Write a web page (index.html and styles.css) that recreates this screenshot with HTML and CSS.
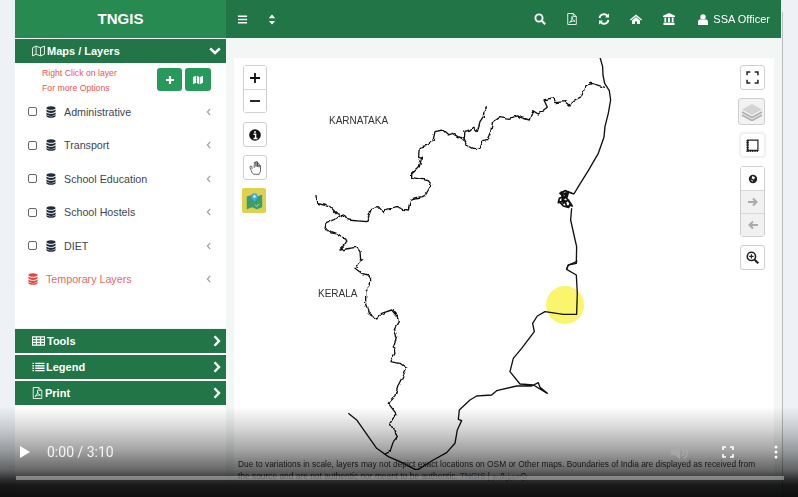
FILE: index.html
```html
<!DOCTYPE html>
<html lang="en">
<head>
<meta charset="utf-8">
<title>TNGIS</title>
<link rel="stylesheet" href="styles.css">
</head>
<body>
<svg class="defs" width="0" height="0">
  <filter id="rough" x="-10%" y="-10%" width="120%" height="120%">
    <feTurbulence type="fractalNoise" baseFrequency=".05" numOctaves="2" seed="4"/>
    <feDisplacementMap in="SourceGraphic" scale="12" xChannelSelector="R" yChannelSelector="G"/>
  </filter>
  <symbol id="db" viewBox="0 0 12 14"><path d="M6 0C2.700 0 .5 1 .5 2.200S2.700 4.400 6 4.400s5.500-1 5.500-2.200S9.300 0 6 0zM.5 3.900v2c0 1.200 2.200 2.200 5.500 2.200s5.500-1 5.500-2.200v-2C10.500 5 8.500 5.500 6 5.500S1.500 5 .5 3.900zM.5 7.500v2c0 1.200 2.200 2.200 5.500 2.200s5.500-1 5.500-2.200v-2C10.500 8.600 8.500 9.100 6 9.100S1.500 8.600.5 7.500zM.5 10.500v1.300C.5 13 2.700 14 6 14s5.500-1 5.500-2.200v-1.300c-1 1.100-3 1.600-5.500 1.600s-4.500-.5-5.500-1.600z"/></symbol>
  <symbol id="left" viewBox="0 0 6 10"><path d="M4.500 1 1 5l3.500 4" fill="none" stroke="currentColor" stroke-width="1.500"/></symbol>
  <symbol id="right" viewBox="0 0 8 12"><path d="M1.500 1.200 6 6l-4.500 4.800" fill="none" stroke="currentColor" stroke-width="2.400"/></symbol>
  <symbol id="pdf" viewBox="0 0 12 14"><path d="M1 .6h6.500L11 4v9.400H1zM7.500.6V4H11M3 11c2-1 3.500-4 3-7 0 3 1.500 5 3.500 5.500C7 9 5 10 3 11z" fill="none" stroke="currentColor" stroke-width="1"/></symbol>
  <symbol id="map" viewBox="0 0 16 14"><path d="M.7 3 5 1l5.500 2L15.300 1v10L10.500 13 5 11 .7 13zM5 1v10M10.500 3v10" fill="none" stroke="currentColor" stroke-width="1.100"/></symbol>
</svg>

<div class="app">
  <aside class="sidebar">
    <div class="logo">TNGIS</div>
    <div class="bar bar-open">
      <svg class="bar-icon"><use href="#map"/></svg>
      <span class="bar-title">Maps / Layers</span>
      <svg class="caret-down" viewBox="0 0 12 8"><path d="M1.200 1.500 6 6l4.800-4.500" fill="none" stroke="currentColor" stroke-width="2.400"/></svg>
    </div>
    <div class="hint-row">
      <div class="hint">
        <p>Right Click on layer</p>
        <p>For more Options</p>
      </div>
      <div class="hint-btn"><svg viewBox="0 0 10 10"><path d="M5 1v8M1 5h8" stroke="currentColor" stroke-width="2.200"/></svg></div>
      <div class="hint-btn hint-btn-wide"><svg viewBox="0 0 12 11"><path d="M0 2 3.600.5v8.400L0 10.500zM4.600.5 7.600 2v8.500L4.600 9zM8.500 2 12 .5v8.400l-3.500 1.600z" fill="currentColor"/></svg></div>
    </div>
    <ul class="layers">
      <li class="layer"><span class="check"></span><svg class="db"><use href="#db"/></svg><span class="layer-name">Administrative</span><svg class="chev"><use href="#left"/></svg></li>
      <li class="layer"><span class="check"></span><svg class="db"><use href="#db"/></svg><span class="layer-name">Transport</span><svg class="chev"><use href="#left"/></svg></li>
      <li class="layer"><span class="check"></span><svg class="db"><use href="#db"/></svg><span class="layer-name">School Education</span><svg class="chev"><use href="#left"/></svg></li>
      <li class="layer"><span class="check"></span><svg class="db"><use href="#db"/></svg><span class="layer-name">School Hostels</span><svg class="chev"><use href="#left"/></svg></li>
      <li class="layer"><span class="check"></span><svg class="db"><use href="#db"/></svg><span class="layer-name">DIET</span><svg class="chev"><use href="#left"/></svg></li>
      <li class="layer layer-temp"><svg class="db"><use href="#db"/></svg><span class="layer-name">Temporary Layers</span><svg class="chev"><use href="#left"/></svg></li>
    </ul>
    <div class="bars">
      <div class="bar">
        <svg class="bar-icon" viewBox="0 0 16 14"><path d="M.5 2h15v10H.5zM.5 5.300h15M.5 8.700h15M5.500 2v10M10.500 2v10" fill="none" stroke="currentColor" stroke-width="1.500"/></svg>
        <span class="bar-title">Tools</span>
        <svg class="caret"><use href="#right"/></svg>
      </div>
      <div class="bar">
        <svg class="bar-icon" viewBox="0 0 16 14"><path d="M.5 2.500h2M4 2.500h11.500M.5 5.500h2M4 5.500h11.500M.5 8.500h2M4 8.500h11.500M.5 11.500h2M4 11.500h11.500" stroke="currentColor" stroke-width="1.700"/></svg>
        <span class="bar-title bar-title-tight">Legend</span>
        <svg class="caret"><use href="#right"/></svg>
      </div>
      <div class="bar">
        <svg class="bar-icon bar-icon-pdf"><use href="#pdf"/></svg>
        <span class="bar-title">Print</span>
        <svg class="caret"><use href="#right"/></svg>
      </div>
    </div>
  </aside>

  <div class="main">
    <header class="topbar">
      <svg class="nav-icon menu-icon" viewBox="0 0 12 10"><path d="M1 1.500h10M1 5h10M1 8.500h10" stroke="currentColor" stroke-width="1.800"/></svg>
      <svg class="nav-icon sort-icon" viewBox="0 0 8 12"><path d="M4 .5 7.500 4.500H.5zM4 11.500.5 7.500h7z" fill="currentColor"/></svg>
      <div class="nav-right">
        <svg class="nav-icon" viewBox="0 0 12 12"><circle cx="5" cy="5" r="3.600" fill="none" stroke="currentColor" stroke-width="1.900"/><path d="m7.800 7.800 3.400 3.400" stroke="currentColor" stroke-width="2.200"/></svg>
        <svg class="nav-icon"><use href="#pdf"/></svg>
        <svg class="nav-icon" viewBox="0 0 12 12"><path d="M1.500 5A4.600 4.600 0 0 1 9.500 2.800M10.500 7A4.600 4.600 0 0 1 2.500 9.200" fill="none" stroke="currentColor" stroke-width="1.900"/><path d="M11 .5v4H7zM1 11.500v-4h4z" fill="currentColor"/></svg>
        <svg class="nav-icon" viewBox="0 0 12 11"><path d="M6 1 0 6l.8.900L6 2.700l5.200 4.200L12 6zM2 7v3.500h3V8h2v2.500h3V7L6 3.600z" fill="currentColor"/></svg>
        <svg class="nav-icon nav-icon-bank" viewBox="0 0 14 13"><path d="M7 0 .5 3v1.200h13V3zM2 5h2v5H2zM6 5h2v5H6zM10 5h2v5h-2zM1 10.600h12V13H1z" fill="currentColor"/></svg>
        <span class="user">
          <svg class="user-icon" viewBox="0 0 10 11"><circle cx="5" cy="3" r="2.700" fill="currentColor"/><path d="M0 11V8c0-1.800 1.200-2.700 2.500-2.700 1.500 1 3.500 1 5 0C8.800 5.300 10 6.200 10 8v3z" fill="currentColor"/></svg>
          SSA Officer
        </span>
      </div>
    </header>

    <div class="content">
      <div class="map">
        <svg class="map-lines" viewBox="234 58 540 439">
          <circle class="marker" cx="565" cy="305" r="19"/>
          <g transform="translate(300 50) scale(.3333)">
            <path class="smooth" d="M900 22 908 50 909 75 914 100 928 122 932 150 925 190 915 230 912 262 895 310 865 362 835 410 822 432"/>
            <path class="blob" d="M822 432 795 422 780 430 792 440 778 445 775 458 795 452 800 470 815 465 805 450 790 460 785 432 805 428 800 445 812 462 818 470M782 425 798 436 786 450 802 438 794 428M776 452 790 468 806 472 812 458"/>
            <path class="smooth" d="M815 475 812 510 822 555 830 590 829 640 805 645 800 657"/>
            <g class="rough">
              <path d="M48 435 50 460 72 465 90 470 110 490 125 498 130 492 145 510 200 515 207 495 215 475 235 470 252 488 258 478 290 470 310 478 325 480 333 447 375 438 385 420 395 405 385 392 350 385 335 382 335 372 358 350 365 325 356 322 358 292 385 285 400 268 405 245 428 240 445 255 460 250 490 268 500 285 520 295 540 295 548 275 560 272 572 245 578 215 600 200 630 205 650 198 688 210 698 182 715 192 742 172 732 150 760 143 768 158 795 155 810 168 815 155 845 140 855 110 875 100 915 112"/>
              <path d="M490 268 492 245 510 240 518 232 532 245 540 215 550 200 552 185 560 172"/>
              <path d="M130 492 100 510 78 518 75 538 110 550 135 565 138 578 120 600 170 592 180 605 182 630 190 630"/>
            </g>
          </g>
          <g transform="translate(300 260) scale(.3333)">
            <g class="rough">
              <path d="M190 0 178 5 165 25 185 40 205 45 212 60 210 80 197 95 197 130 205 160 230 177 245 160 275 150 292 170 295 185 283 205 290 230 280 260 285 280 270 305 300 310 320 325 310 345 295 375 285 410 265 430 288 460 270 490 292 530 280 545 270 575 255 582"/>
            </g>
            <path class="smooth" d="M145 460 170 480 230 565 265 590 300 605 345 628 355 628 400 600 440 578 465 550 472 510 485 482 475 478 478 450 510 420 530 408 575 405 590 392 650 378 695 378 715 368 720 382 742 400 700 375 660 372 630 335 640 295 665 265 703 215 698 190 712 168 735 155 790 163 830 163 832 100 829 45 800 28 805 15 830 5 830 0"/>
          </g>
        </svg>

        <span class="region region-ka">KARNATAKA</span>
        <span class="region region-kl">KERALA</span>

        <div class="tools tools-left">
          <div class="tool-group tool-group-zoom">
            <div class="tool tool-zoom"><svg viewBox="0 0 12 12"><path d="M6 1v10M1 6h10" stroke="#111" stroke-width="1.800"/></svg></div>
            <div class="tool tool-zoom"><svg viewBox="0 0 12 12"><path d="M1 6h10" stroke="#111" stroke-width="1.800"/></svg></div>
          </div>
          <div class="tool"><svg viewBox="0 0 12 12"><circle cx="6" cy="6" r="5.800" fill="#111"/><path d="M6 2v2M4.500 5.300H6.600V9M4.500 9.500h4" stroke="#fff" stroke-width="1.400" fill="none"/></svg></div>
          <div class="tool"><svg class="hand" viewBox="0 0 14 15"><path d="M4 9V6.500L2.500 6 2 7.500 4 12.500 5.500 14.300H11L12.500 11V5.500L11 5V7.500M11 7V3.500L9.500 3V7M9.500 6V1.800L8 1.500V7M8 6V2.500L6.300 2.200 6.200 8" fill="none" stroke="#444" stroke-width=".8"/></svg></div>
          <div class="thumb"><svg viewBox="0 0 22 22"><path d="M3 6 9 4l5 2 6-2v14l-6 2-5-2-6 2z" fill="#3a9d6a"/><circle cx="11.500" cy="6" r="3.500" fill="#4aa8e0"/><path d="m8.500 7.500 3 5 3-5z" fill="#4aa8e0"/><circle cx="11.500" cy="6" r="1.300" fill="#fff"/><path d="m12 15 2 2 3-3" stroke="#b8e8b0" fill="none"/></svg></div>
        </div>

        <div class="tools tools-right">
          <div class="tool tool-big"><svg viewBox="0 0 12 12"><path d="M1 4V1h3M8 1h3v3M11 8v3H8M4 11H1V8" fill="none" stroke="#222" stroke-width="1.400"/></svg></div>
          <div class="tool tool-layers"><svg viewBox="0 0 22 18"><path d="M11 1 21 6.500 11 12 1 6.500z" fill="#d4d4d4"/><path d="M1 9 11 14.500 21 9M1 12 11 17.500 21 12" fill="none" stroke="#b0b0b0" stroke-width="1.800"/></svg></div>
          <div class="tool tool-scale"><svg viewBox="0 0 12 12"><path d="M1.500 1H11V10.500H1.500z" fill="none" stroke="#222" stroke-width="1.100"/><path d="M1.500 1v10.500H11" fill="none" stroke="#222" stroke-width="2.200" stroke-dasharray="1 .6"/></svg></div>
          <div class="tool-group tool-nav">
            <div class="tool tool-nav-item"><svg viewBox="0 0 12 12"><circle cx="6" cy="6" r="5" fill="#222"/><path d="M5 2.500 8.500 4 7 6.500 4.500 5.500zM3 7l2.500.5.500 2z" fill="#fff"/></svg></div>
            <div class="tool tool-nav-item tool-off"><svg viewBox="0 0 12 12"><path d="M1 6h8M6 2.500 9.500 6 6 9.500" fill="none" stroke="#aaa" stroke-width="2"/></svg></div>
            <div class="tool tool-nav-item tool-off"><svg viewBox="0 0 12 12"><path d="M11 6H3M6 2.500 2.500 6 6 9.500" fill="none" stroke="#aaa" stroke-width="2"/></svg></div>
          </div>
          <div class="tool tool-big"><svg viewBox="0 0 12 12"><circle cx="5" cy="5" r="3.800" fill="none" stroke="#222" stroke-width="1.500"/><path d="m8 8 3.300 3.300" stroke="#222" stroke-width="2"/><path d="M5 3v4M3 5h4" stroke="#222" stroke-width="1.100"/></svg></div>
        </div>

        <div class="disclaimer">
          <p>Due to variations in scale, layers may not depict exact locations on OSM or Other maps. Boundaries of India are displayed as received from</p>
          <p>the source and are not authentic nor meant to be authentic. <span class="link">TNGIS</span> | தமிழ்நாடு</p>
        </div>
      </div>
    </div>
  </div>
</div>
<div class="rail"></div>

<div class="player">
  <div class="player-row">
    <svg class="play" viewBox="0 0 10 12"><path d="M0 0 10 6 0 12z" fill="#fff"/></svg>
    <span class="time">0:00 / 3:10</span>
    <svg class="volume" viewBox="0 0 18 16"><path d="M0 5h4l5-4.500v15L4 11H0z" fill="#aaa"/><path d="M11 4a5 5 0 0 1 0 8M13 1.500a8 8 0 0 1 0 13" fill="none" stroke="#aaa" stroke-width="1.500"/></svg>
    <svg class="full" viewBox="0 0 12 12"><path d="M1 4V1h3M8 1h3v3M11 8v3H8M4 11H1V8" fill="none" stroke="#fff" stroke-width="1.600"/></svg>
    <svg class="more" viewBox="0 0 4 14"><circle cx="2" cy="2" r="1.500" fill="#fff"/><circle cx="2" cy="7" r="1.500" fill="#fff"/><circle cx="2" cy="12" r="1.500" fill="#fff"/></svg>
  </div>
  <div class="progress"></div>
</div>
</body>
</html>
```

FILE: styles.css
```css
* { box-sizing: border-box; }
html, body { margin: 0; height: 497px; overflow: hidden; }
body {
  position: relative;
  display: flex;
  background: #eef2f7;
  font-family: "Liberation Sans", Arial, sans-serif;
  color: #333;
}
p, ul { margin: 0; padding: 0; }
.defs { position: absolute; }

.app {
  display: flex;
  width: 766px;
  height: 497px;
  margin-left: 15px;
  filter: blur(.35px);
}
.rail {
  width: 1px;
  height: 485px;
  margin: 12px 0 0 1px;
  background: #b9bdbd;
}

/* sidebar */
.sidebar { width: 211px; background: #fff; display: flex; flex-direction: column; }
.logo {
  height: 38px;
  background: #278a50;
  color: #fff;
  font-weight: bold;
  font-size: 15px;
  line-height: 38px;
  text-align: center;
}
.bar {
  display: flex;
  align-items: center;
  height: 24px;
  padding: 0 5px 0 17px;
  background: #217547;
  color: #fff;
  font-size: 11px;
  font-weight: bold;
}
.bar-open { margin-top: 1px; }
.bar-icon { width: 13px; height: 12px; margin-right: 2px; }
.bar-icon-pdf { width: 11px; height: 12px; }
.bar-title { flex: 1; }
.bar-title-tight { margin-left: -1px; }
.caret-down { width: 12px; height: 8px; }
.caret { width: 8px; height: 12px; }

.hint-row { display: flex; align-items: flex-start; padding: 5px 15px 0 27px; height: 32px; }
.hint { flex: 1; margin-top: -2px; color: #ec564b; font-size: 8.700px; line-height: 15px; }
.hint-btn {
  display: flex;
  align-items: center;
  justify-content: center;
  width: 25px;
  height: 23px;
  margin-left: 3px;
  background: #27995a;
  border-radius: 3px;
  color: #fff;
}
.hint-btn-wide { width: 26px; }
.hint-btn svg { width: 10px; height: 10px; }

.layers { list-style: none; height: 201px; }
.layer {
  display: flex;
  align-items: center;
  height: 33.500px;
  padding: 0 14px 0 13px;
  font-size: 10.700px;
  color: #3f4650;
}
.check {
  width: 9px;
  height: 9px;
  border: 1px solid #666;
  border-radius: 2px;
  margin-right: 9px;
  background: #fff;
}
.db { width: 10px; height: 12px; fill: #1e2b3a; margin-right: 8px; }
.layer-name { flex: 1; }
.chev { width: 6px; height: 8px; color: #9aa3a8; }
.layer-temp { color: #df6a6a; }
.layer-temp .db { fill: #e0483e; }

.bars {
  margin-top: 32px;
  display: flex;
  flex-direction: column;
  gap: 2px;
  border-top: 1px solid #f1f4f3;
}

/* main */
.main { flex: 1; display: flex; flex-direction: column; min-width: 0; }
.topbar {
  display: flex;
  align-items: center;
  height: 38px;
  padding: 0 11px;
  background: #217547;
  color: #fff;
  flex: none;
}
.nav-icon { width: 12px; height: 12px; flex: none; }
.nav-icon-bank { width: 14px; }
.menu-icon { width: 11px; height: 11px; margin-right: 20px; }
.sort-icon { width: 8px; height: 11px; }
.nav-right { margin-left: auto; display: flex; align-items: center; gap: 20px; }
.user { display: flex; align-items: center; gap: 5px; margin-left: 2px; font-size: 11px; }
.user-icon { width: 10px; height: 11px; }

.content { flex: 1; padding: 20px 7px 0 8px; background: #f2f7f6; }
.map { position: relative; height: 100%; background: #fff; overflow: hidden; }
.map-lines { position: absolute; inset: 0; width: 540px; height: 439px; }
.map-lines path { fill: none; stroke: #111; stroke-width: 4; stroke-linejoin: round; }
.map-lines .blob { stroke-width: 5; }
.map-lines .rough { filter: url(#rough); }
.marker { fill: #faf56a; }

.region { position: absolute; font-size: 10px; color: #333; }
.region-ka { left: 95px; top: 57px; }
.region-kl { left: 84px; top: 230px; }

.tools { position: absolute; top: 7px; display: flex; flex-direction: column; gap: 8px; }
.tools-left { left: 9px; width: 24px; }
.tools-right { right: 9px; width: 25px; }
.tool-group { display: flex; flex-direction: column; border: 1px solid #cfcfcf; border-radius: 3px; background: #fff; }
.tool-group-zoom { margin-bottom: 1px; }
.tool {
  display: flex;
  align-items: center;
  justify-content: center;
  height: 25px;
  background: #fff;
  border: 1px solid #cfcfcf;
  border-radius: 3px;
}
.tool svg { width: 12px; height: 12px; }
.tool .hand { width: 14px; height: 15px; }
.tool-big svg { width: 13px; height: 13px; }
.tool-zoom { height: 23px; border: 0; border-radius: 0; }
.tool-zoom + .tool-zoom { border-top: 1px solid #d8d8d8; }
.tool-layers { height: 27px; width: 27px; margin-left: -2px; background: #f2f2f2; }
.tool-layers svg { width: 22px; height: 18px; }
.tool-scale { box-shadow: 0 0 3px #ddd; border-color: #eee; height: 24px; }
.tool-scale svg { width: 13px; height: 13px; }
.tool-nav { margin-top: 1px; }
.tool-nav-item { height: 23px; border: 0; border-radius: 0; }
.tool-nav-item svg { width: 10px; height: 10px; }
.tool-off { background: #f1f1f1; border-top: 1px solid #d8d8d8; }
.tool-off svg { width: 12px; height: 12px; }
.thumb {
  display: flex;
  align-items: center;
  justify-content: center;
  width: 24px;
  height: 25px;
  margin-left: -1px;
  background: #e0d050;
  border-radius: 2px;
}
.thumb svg { width: 20px; height: 20px; }

.disclaimer {
  position: absolute;
  left: 4px;
  top: 400px;
  white-space: nowrap;
  font-size: 8.400px;
  line-height: 12px;
  color: #333;
}
.link { color: #2d6f8f; }

/* video player overlay */
.player {
  position: absolute;
  left: 0;
  right: 0;
  bottom: 0;
  height: 90px;
  display: flex;
  flex-direction: column;
  justify-content: flex-end;
  background: linear-gradient(to bottom, rgba(0,0,0,0) 0%, rgba(0,0,0,.17) 25%, rgba(0,0,0,.36) 48%, rgba(0,0,0,.6) 70%, rgba(0,0,0,.82) 81%, rgba(0,0,0,.9) 87%, rgba(0,0,0,.94) 100%);
}
.player-row {
  display: flex;
  align-items: center;
  height: 24px;
  margin-bottom: 12px;
  padding: 0 20px;
  color: #fff;
}
.play { width: 10px; height: 12px; margin-right: 17px; }
.time { flex: 1; font-family: Roboto, sans-serif; font-size: 14px; color: #f4f4f4; }
.volume { width: 18px; height: 16px; margin-right: 33px; opacity: .8; }
.full { width: 12px; height: 12px; margin-right: 40px; }
.more { width: 4px; height: 14px; }
.progress {
  height: 4px;
  margin: 0 14px 17px 16px;
  background: rgba(255,255,255,.38);
}
```
